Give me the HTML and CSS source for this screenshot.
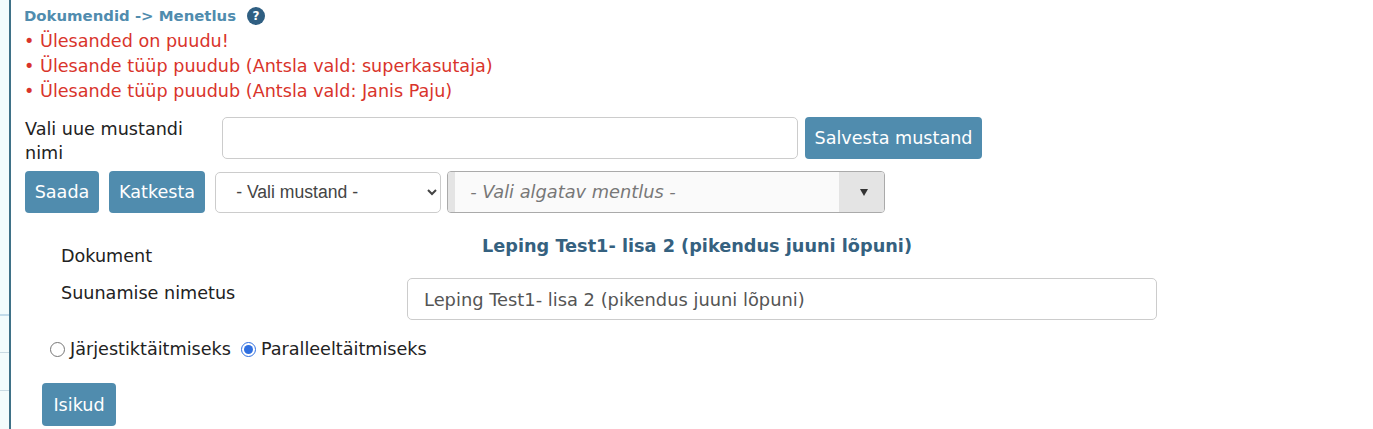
FILE: index.html
```html
<!DOCTYPE html>
<html lang="et">
<head>
    <meta charset="UTF-8">
    <title>Menetlus</title>
    <link rel="stylesheet" href="styles.css">
</head>
<body>
    <div class="side-strip">
        <div class="strip-line first"></div>
        <div class="strip-line"></div>
        <div class="strip-line"></div>
    </div>
    <div class="content">
        <div class="crumbs">
            <span>Dokumendid -&gt; Menetlus</span>
            <span class="help">?</span>
        </div>
        <ul class="errors">
            <li>Ülesanded on puudu!</li>
            <li>Ülesande tüüp puudub (Antsla vald: superkasutaja)</li>
            <li>Ülesande tüüp puudub (Antsla vald: Janis Paju)</li>
        </ul>

        <div class="draft-row">
            <label class="draft-label" for="draftName">Vali uue mustandi nimi</label>
            <input type="text" id="draftName" class="field draft-input">
            <button class="btn save">Salvesta mustand</button>
        </div>

        <div class="action-row">
            <button class="btn send">Saada</button>
            <button class="btn cancel">Katkesta</button>
            <select class="draft-select">
                <option>- Vali mustand -</option>
            </select>
            <div class="combo">
                <span class="combo-text">- Vali algatav mentlus -</span>
                <span class="combo-arrow"></span>
            </div>
        </div>

        <div class="doc-row">
            <div class="doc-label">Dokument</div>
            <div class="doc-title">Leping Test1- lisa 2 (pikendus juuni lõpuni)</div>
        </div>

        <div class="name-row">
            <label class="name-label" for="routeName">Suunamise nimetus</label>
            <input type="text" id="routeName" class="field name-input" value="Leping Test1- lisa 2 (pikendus juuni lõpuni)">
        </div>

        <div class="radio-row">
            <input type="radio" name="fill" id="fillSeq">
            <label for="fillSeq">Järjestiktäitmiseks</label>
            <input type="radio" name="fill" id="fillPar" checked>
            <label for="fillPar">Paralleeltäitmiseks</label>
        </div>

        <button class="btn persons">Isikud</button>
    </div>
</body>
</html>
```

FILE: styles.css
```css
* {
    box-sizing: border-box;
}
html, body {
    margin: 0;
    height: 429px;
    overflow: hidden;
}
body {
    display: flex;
    background: #fff;
    font-family: "DejaVu Sans", Verdana, sans-serif;
    font-size: 17.6px;
    color: #222;
}
.side-strip {
    width: 9px;
    padding-top: 314px;
    background-color: #f3fcfc;
}
.strip-line {
    height: 1px;
    margin-bottom: 37px;
    background: #c9dbe3;
}
.strip-line.first {
    height: 2px;
    margin-bottom: 36px;
    background: #c3dcea;
}
.content {
    flex: 1;
    border-left: 2px solid #3f7187;
    padding: 6px 0 0 14px;
}
.crumbs {
    display: flex;
    align-items: center;
    gap: 11px;
    height: 20px;
    margin-left: -1px;
    font-size: 14.9px;
    font-weight: bold;
    color: #508cae;
}
.help {
    width: 18px;
    height: 18px;
    border-radius: 50%;
    background: #2f5f82;
    color: #fff;
    font-size: 12px;
    line-height: 18px;
    text-align: center;
}
.errors {
    list-style: none;
    margin: 3px 0 0;
    padding: 0;
    color: #d9342b;
    line-height: 25px;
}
.errors li::before {
    content: "•";
    display: inline-block;
    width: 16px;
    margin-left: -1px;
}
.draft-row {
    display: flex;
    align-items: flex-start;
    margin-top: 13px;
}
.draft-label {
    width: 197px;
    height: 42px;
    padding: 0 20px 0 0;
    line-height: 24px;
}
.field {
    height: 42px;
    border: 1px solid #ccc;
    border-radius: 5px;
    background: #fff;
    font: inherit;
    color: #555;
}
.draft-input {
    width: 576px;
    margin-right: 7px;
}
.btn {
    height: 42px;
    padding: 0 10px;
    border: none;
    border-radius: 4px;
    background: #508cae;
    color: #fff;
    font: inherit;
}
.save {
    width: 177px;
    padding: 0;
}
.action-row {
    display: flex;
    align-items: center;
    margin-top: 12px;
}
.action-row .btn {
    margin-right: 10px;
}
.send {
    width: 74px;
    padding: 0;
}
.draft-select {
    width: 226px;
    height: 41px;
    margin-right: 6px;
    padding-left: 16px;
    border: 1px solid #ccc;
    border-radius: 5px;
    background: #fff;
    font-family: "Liberation Sans", Arial, sans-serif;
    font-size: 17.6px;
    color: #444;
}
.combo {
    display: flex;
    width: 438px;
    height: 42px;
    border: 1px solid #aaa;
    border-radius: 4px;
    background: #fafafa;
    overflow: hidden;
}
.combo-text {
    flex: 1;
    border-left: 7px solid #e4e4e4;
    padding-left: 15px;
    line-height: 40px;
    font-size: 17.8px;
    font-style: italic;
    color: #777;
}
.combo-arrow {
    width: 45px;
    background: #e4e4e4;
    position: relative;
}
.combo-arrow::after {
    content: "";
    position: absolute;
    left: 21px;
    top: 17px;
    border-left: 4px solid transparent;
    border-right: 4px solid transparent;
    border-top: 7px solid #333;
}
.doc-row {
    display: flex;
    margin-top: 22px;
}
.doc-label {
    width: 212px;
    padding: 11px 0 0 36px;
    line-height: 20px;
}
.doc-title {
    width: 920px;
    text-align: center;
    font-size: 17.7px;
    font-weight: bold;
    color: #35617f;
    line-height: 22px;
}
.name-row {
    display: flex;
    align-items: flex-start;
    margin-top: 12px;
}
.name-label {
    width: 382px;
    padding: 5px 0 0 36px;
    line-height: 20px;
}
.name-input {
    width: 750px;
    padding-left: 16px;
    font-size: 17.85px;
}
.radio-row {
    display: flex;
    align-items: center;
    height: 24px;
    margin: 17px 0 0 25px;
}
.radio-row input {
    width: 15px;
    height: 15px;
    margin: 0 5px 0 0;
    accent-color: #2f6fe0;
}
.radio-row label {
    margin-right: 10px;
}
.persons {
    display: block;
    width: 74px;
    height: 43px;
    margin: 22px 0 0 17px;
    padding: 0;
}
```
